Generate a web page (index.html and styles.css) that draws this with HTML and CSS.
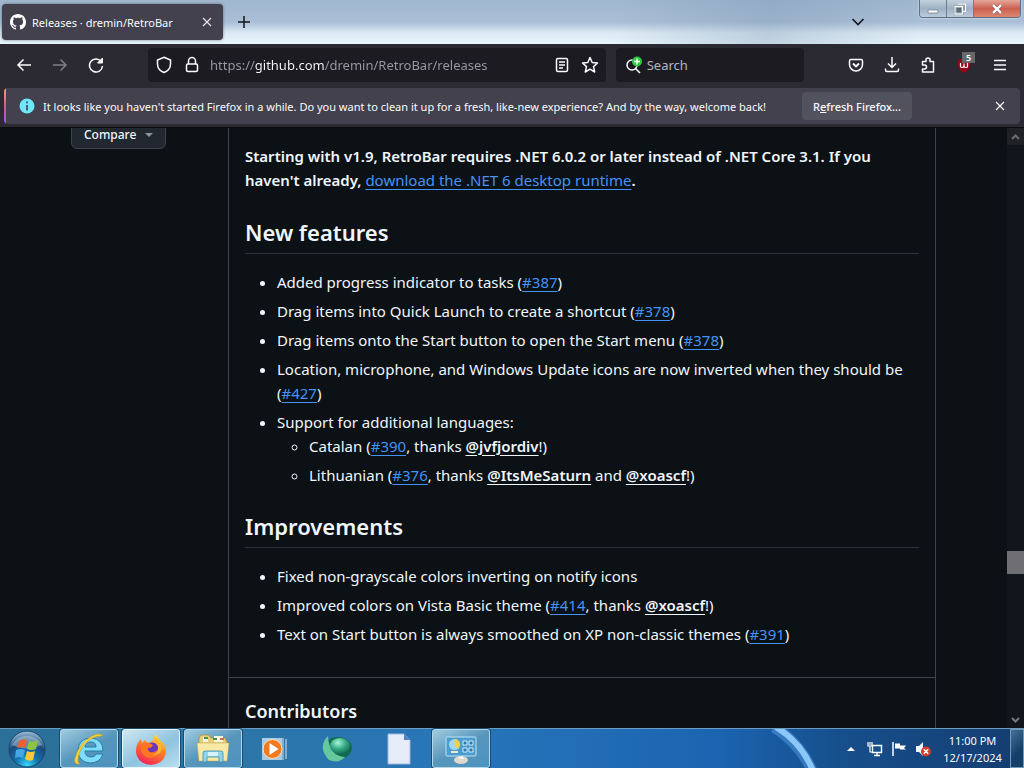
FILE: index.html
```html
<!DOCTYPE html>
<html lang="en">
<head>
<meta charset="utf-8">
<title>Releases · dremin/RetroBar</title>
<link rel="stylesheet" href="styles.css">
</head>
<body>
<div class="desktop">
  <header class="titlebar">
    <div class="tab">
      <svg class="tab-logo" viewBox="0 0 16 16"><path fill="#fff" d="M8 0C3.58 0 0 3.58 0 8c0 3.54 2.29 6.53 5.47 7.59.4.07.55-.17.55-.38 0-.19-.01-.82-.01-1.49-2.01.37-2.53-.49-2.69-.94-.09-.23-.48-.94-.82-1.13-.28-.15-.68-.52-.01-.53.63-.01 1.08.58 1.23.82.72 1.21 1.87.87 2.33.66.07-.52.28-.87.51-1.07-1.78-.2-3.64-.89-3.64-3.95 0-.87.31-1.59.82-2.15-.08-.2-.36-1.02.08-2.12 0 0 .67-.21 2.2.82.64-.18 1.32-.27 2-.27s1.36.09 2 .27c1.53-1.04 2.2-.82 2.2-.82.44 1.1.16 1.92.08 2.12.51.56.82 1.27.82 2.15 0 3.07-1.87 3.75-3.65 3.95.29.25.54.73.54 1.48 0 1.07-.01 1.93-.01 2.2 0 .21.15.46.55.38A8.01 8.01 0 0 0 16 8c0-4.42-3.58-8-8-8z"/></svg>
      <span class="tab-title">Releases · dremin/RetroBar</span>
      <button class="icon-btn tab-close" aria-label="Close tab"><svg width="10" height="10" viewBox="0 0 10 10"><path d="M1 1l8 8M9 1L1 9" stroke="#e4e4ea" stroke-width="1.2"/></svg></button>
    </div>
    <button class="icon-btn new-tab" aria-label="New tab"><svg width="14" height="14" viewBox="0 0 14 14"><path d="M7 1v12M1 7h12" stroke="#15141a" stroke-width="1.5"/></svg></button>
    <button class="icon-btn list-tabs" aria-label="List all tabs"><svg width="14" height="8" viewBox="0 0 14 8"><path d="M1.5 1L7 6.500l5.500-5.500" fill="none" stroke="#15141a" stroke-width="1.6"/></svg></button>
    <div class="window-buttons">
      <button class="win-btn" aria-label="Minimize"><svg width="12" height="12" viewBox="0 0 12 12"><rect x="1" y="7" width="10" height="3" rx="1" fill="#fff" stroke="#65717f" stroke-width=".7"/></svg></button>
      <button class="win-btn" aria-label="Restore"><svg width="12" height="12" viewBox="0 0 12 12"><path d="M4 1h7.500v7.500H9M1 3.500h7.500V11H1zM3.500 6H6v2.500H3.500z" fill="none" stroke="#5c6977" stroke-width="2"/><path d="M4 1h7.500v7.500H9M1 3.500h7.500V11H1z" fill="none" stroke="#fff" stroke-width="1.3"/></svg></button>
      <button class="win-btn win-close" aria-label="Close"><svg width="12" height="12" viewBox="0 0 12 12"><path d="M2 2l8 8M10 2l-8 8" stroke="#733" stroke-width="3.600"/><path d="M2 2l8 8M10 2l-8 8" stroke="#fff" stroke-width="2.500"/></svg></button>
    </div>
  </header>

  <nav class="toolbar" aria-label="Navigation">
    <div class="tool-group">
      <button class="icon-btn tool" aria-label="Back"><svg width="16" height="16" viewBox="0 0 16 16"><path d="M15 8H2M7.500 2.500L2 8l5.500 5.500"/></svg></button>
      <button class="icon-btn tool dim" aria-label="Forward"><svg width="16" height="16" viewBox="0 0 16 16"><path d="M1 8h13M8.500 2.500L14 8l-5.500 5.500"/></svg></button>
      <button class="icon-btn tool" aria-label="Reload"><svg width="16" height="16" viewBox="0 0 16 16"><path d="M13.500 5A6.500 6.500 0 1 0 14.500 9"/><path d="M14.500 1v5h-5z" fill="#fbfbfe" stroke-width="1"/></svg></button>
    </div>
    <div class="field url-field">
      <button class="icon-btn field-btn" aria-label="Tracking protection"><svg width="16" height="18" viewBox="0 0 16 18"><path d="M8 1.300L14.500 4v4c0 4-2.700 7-6.500 8.500C4.200 15 1.500 12 1.500 8V4z"/></svg></button>
      <button class="icon-btn field-btn" aria-label="Site information"><svg width="14" height="18" viewBox="0 0 14 18"><path d="M3.500 8V5a3.500 3.500 0 0 1 7 0v3"/><rect x="1.500" y="8" width="11" height="7.500" rx="1.500"/></svg></button>
      <input class="url-input" type="text" aria-label="Address" value="https://github.com/dremin/RetroBar/releases">
      <button class="icon-btn field-btn" aria-label="Reader view"><svg width="16" height="16" viewBox="0 0 16 16"><rect x="2.500" y="1.500" width="11" height="13" rx="1.500"/><path d="M5 5h6M5 8h6M5 11h4"/></svg></button>
      <button class="icon-btn field-btn" aria-label="Bookmark"><svg width="18" height="18" viewBox="0 0 18 18"><path d="M9 1.500l2.200 5 5.300.5-4 3.600 1.200 5.400L9 13.200 4.300 16l1.200-5.400-4-3.600 5.300-.5z" stroke-linejoin="round"/></svg></button>
    </div>
    <div class="field search-field">
      <svg class="search-icon" width="18" height="18" viewBox="0 0 18 18"><circle cx="7" cy="9" r="5" fill="none" stroke="#fbfbfe" stroke-width="1.500"/><path d="M10.500 12.500L15 17" stroke="#fbfbfe" stroke-width="1.600"/><circle cx="12" cy="5.500" r="5" fill="#30c83c"/><path d="M12 2.500v6M9 5.500h6" stroke="#fff" stroke-width="1.500"/></svg>
      <input class="search-input" type="text" aria-label="Search" placeholder="Search">
    </div>
    <div class="tool-group tools-right">
      <button class="icon-btn tool" aria-label="Save to Pocket"><svg width="16" height="16" viewBox="0 0 16 16"><path d="M3 2.500h10q1.500 0 1.500 1.500v3.500a6.500 6.500 0 0 1-13 0V4q0-1.500 1.500-1.500z"/><path d="M5 6.500l3 3 3-3" stroke-width="1.800"/></svg></button>
      <button class="icon-btn tool" aria-label="Downloads"><svg width="16" height="16" viewBox="0 0 16 16"><path d="M8 0v10.500M4 6.500l4 4 4-4M1.500 11.500V13q0 1.500 1.500 1.500h10q1.500 0 1.500-1.500v-1.500"/></svg></button>
      <button class="icon-btn tool" aria-label="Extensions"><svg width="16" height="16" viewBox="0 0 16 16"><path d="M6 4.500V3a2 2 0 0 1 4 0v1.500h3.500v10.500H2.500V12H4.500a2 2 0 0 0 0-4H2.500V4.500z" stroke-linejoin="round"/></svg></button>
      <button class="icon-btn tool badge-host" aria-label="uBlock Origin, 5 blocked"><svg width="16" height="16" viewBox="0 0 16 16"><path d="M8 1l6 2v5c0 4-3 6-6 8-3-2-6-4-6-8V3z" fill="#970718" stroke="none"/><path d="M4.500 6v3q0 1.500 1.500 1.500T8 9V6.500M8 9q0 1.500 1.800 1.500T11.500 9V6" stroke-width="1.200"/></svg><span class="badge">5</span></button>
      <button class="icon-btn tool" aria-label="Menu"><svg width="16" height="16" viewBox="0 0 16 16"><path d="M2 3.500h12M2 8h12M2 12.500h12"/></svg></button>
    </div>
  </nav>

  <div class="notice-row">
    <div class="notice" role="status">
      <svg class="notice-icon" width="16" height="16" viewBox="0 0 16 16"><circle cx="8" cy="8" r="7.500" fill="#6fe6fa"/><path d="M8 3.500v1.800M8 7v5.500" stroke="#35444f" stroke-width="1.600"/></svg>
      <span class="notice-text">It looks like you haven't started Firefox in a while. Do you want to clean it up for a fresh, like-new experience? And by the way, welcome back!</span>
      <button class="notice-action">R<u>e</u>fresh Firefox...</button>
      <button class="icon-btn notice-close" aria-label="Dismiss"><svg width="10" height="10" viewBox="0 0 10 10"><path d="M1 1l8 8M9 1L1 9" stroke="#fbfbfe" stroke-width="1.200"/></svg></button>
    </div>
  </div>

  <div class="viewport">
    <div class="page">
      <aside class="sidebar">
        <button class="compare">Compare <svg width="8" height="4" viewBox="0 0 8 4"><path d="M0 0h8L4 4z" fill="#8d96a0"/></svg></button>
      </aside>
      <main class="release">
        <section class="notes">
          <p class="lead">Starting with v1.9, RetroBar requires .NET 6.0.2 or later instead of .NET Core 3.1. If you haven't already, <a href="#">download the .NET 6 desktop runtime</a>.</p>
          <h2>New features</h2>
          <ul>
            <li>Added progress indicator to tasks (<a href="#">#387</a>)</li>
            <li>Drag items into Quick Launch to create a shortcut (<a href="#">#378</a>)</li>
            <li>Drag items onto the Start button to open the Start menu (<a href="#">#378</a>)</li>
            <li>Location, microphone, and Windows Update icons are now inverted when they should be (<a href="#">#427</a>)</li>
            <li>Support for additional languages:
              <ul>
                <li>Catalan (<a href="#">#390</a>, thanks <a class="mention" href="#">@jvfjordiv</a>!)</li>
                <li>Lithuanian (<a href="#">#376</a>, thanks <a class="mention" href="#">@ItsMeSaturn</a> and <a class="mention" href="#">@xoascf</a>!)</li>
              </ul>
            </li>
          </ul>
          <h2>Improvements</h2>
          <ul>
            <li>Fixed non-grayscale colors inverting on notify icons</li>
            <li>Improved colors on Vista Basic theme (<a href="#">#414</a>, thanks <a class="mention" href="#">@xoascf</a>!)</li>
            <li>Text on Start button is always smoothed on XP non-classic themes (<a href="#">#391</a>)</li>
          </ul>
        </section>
        <section class="contributors"><h3>Contributors</h3></section>
      </main>
    </div>
    <div class="scrollbar">
      <button class="icon-btn scroll-btn scroll-up" aria-label="Scroll up"><svg width="9" height="6" viewBox="0 0 9 6"><path d="M1 5l3.500-3.500L8 5" fill="none" stroke="#6b6b70" stroke-width="2"/></svg></button>
      <div class="scroll-track"><div class="scroll-thumb"></div></div>
      <button class="icon-btn scroll-btn" aria-label="Scroll down"><svg width="9" height="6" viewBox="0 0 9 6"><path d="M1 1l3.500 3.500L8 1" fill="none" stroke="#77777c" stroke-width="2"/></svg></button>
    </div>
  </div>

  <footer class="taskbar">
    <svg class="wallpaper-arc" width="70" height="40" viewBox="0 0 70 40"><path d="M4 -2Q30 14 42 42" fill="none" stroke="#5ba6ec" stroke-width="11" opacity=".45"/><path d="M6 -2Q32 14 43 42" fill="none" stroke="#8cc7fa" stroke-width="6"/></svg>
    <button class="start" aria-label="Start">
      <svg width="38" height="38" viewBox="0 0 38 38"><defs><radialGradient id="orb" cx=".5" cy=".95" r=".9"><stop offset="0" stop-color="#35d8fa"/><stop offset=".35" stop-color="#1474b2"/><stop offset=".7" stop-color="#1b4a7c"/><stop offset="1" stop-color="#8cb0cc"/></radialGradient></defs><circle cx="19" cy="19" r="18" fill="url(#orb)" stroke="#17456c"/><path d="M4 15a16 14 0 0 1 30 0Q19 22 4 15z" fill="#cfe0ea" opacity=".4"/><path d="M11 11q4-3 8-1l-2 8q-4-2-8 0z" fill="#ee6032"/><path d="M21 11q4 2 9-1l-2 9q-5 2-9 0z" fill="#8fc442"/><path d="M8 20q5-2 9 0l-2 8q-4-2-8 0z" fill="#44a8e4"/><path d="M19 21q4 2 8 0l-2 9q-4 2-8-1z" fill="#fcc832"/></svg>
    </button>
    <div class="tasks">
      <button class="task running" aria-label="Internet Explorer">
        <svg width="34" height="34" viewBox="0 0 34 34"><path d="M31 19H13q0 6 6 6 4 0 5-3h7q-3 9-13 9Q6 30 6 18 7 6 19 6q12 1 12 13zM13 15h11q0-5-5-5t-6 5z" fill="#7fdcfa" stroke="#237fae" stroke-width="1"/><path d="M8 32q-7 1-5-6Q7 11 20 4q8-4 11 0-8-1-16 6Q7 17 6 27q-.5 4 2 5z" fill="#f6d43b" stroke="#c39820" stroke-width=".6"/></svg>
      </button>
      <button class="task running active" aria-label="Firefox">
        <svg width="34" height="34" viewBox="0 0 34 34"><defs><linearGradient id="fox" x1=".8" y1="0" x2=".3" y2="1"><stop offset="0" stop-color="#fff04a"/><stop offset=".4" stop-color="#ff8a20"/><stop offset="1" stop-color="#f4205a"/></linearGradient></defs><path d="M19 8q0-4 4-6 0 4 4 7 5 4 5 10a15 14 0 0 1-30 0q0-8 5-12l1 4 3-3q1 2 4 3 3-1 4-3z" fill="url(#fox)"/><circle cx="18" cy="18" r="7.500" fill="#6c35c0"/><path d="M8 13q6-4 11 0-1 3-5 3-1 2 2 4 5 1 8-3 1 10-8 9-8-1-9-9z" fill="#ff7524"/><path d="M19 10q6 2 5 8-1 4-6 5 9 1 10-7-1-7-9-8z" fill="#ffb22e"/></svg>
      </button>
      <button class="task running" aria-label="File Explorer">
        <svg width="36" height="34" viewBox="0 0 36 34"><path d="M4 6l2-3h8l2 3h14l2 4v18H4z" fill="#e9ce75" stroke="#a5873b" stroke-width=".7"/><path d="M8 5h5v5H8zM19 4h9v6h-9z" fill="#f8f7df"/><path d="M9 6h4M18 7h4" stroke="#43934a" stroke-width="2"/><path d="M25 7h4" stroke="#d26a53" stroke-width="2"/><path d="M2 11h32l-2 18H4z" fill="#f9e9a6" stroke="#bea057" stroke-width=".5"/><path d="M8 30v-9q0-2 2-2h16q2 0 2 2v9h-4v-5H12v5z" fill="#8fd4ec" stroke="#3d8eb0" stroke-width=".8"/><path d="M13 20h10v4H13z" fill="#d7f2fa"/></svg>
      </button>
      <button class="task" aria-label="Media Player">
        <svg width="30" height="28" viewBox="0 0 30 28"><path d="M2 3h20v22H2z" fill="#a9cbe4"/><path d="M23 3v22M26 4v20" stroke="#d8e5ef"/><circle cx="12.500" cy="14" r="9.500" fill="#f27b20" stroke="#fde1c2"/><path d="M9.500 8l9 6-9 6z" fill="#fff"/></svg>
      </button>
      <button class="task" aria-label="Sphere">
        <svg width="34" height="30" viewBox="0 0 34 30"><defs><radialGradient id="orb-green" cx=".4" cy=".3" r=".8"><stop offset="0" stop-color="#a6f5d3"/><stop offset=".5" stop-color="#33a884"/><stop offset="1" stop-color="#0d5f49"/></radialGradient></defs><ellipse cx="18" cy="14" rx="14" ry="11" fill="#13694f"/><path d="M8 2Q-3 13 9 26q10 4 16-3Q9 22 8 2z" fill="#65c99e"/><ellipse cx="20" cy="12" rx="10" ry="8" fill="url(#orb-green)"/></svg>
      </button>
      <button class="task" aria-label="Document">
        <svg width="26" height="32" viewBox="0 0 26 32"><path d="M2 1h16l6 6v24H2z" fill="#e6edf9" stroke="#9fb6da"/><path d="M18 1v6h6z" fill="#4b83c9"/></svg>
      </button>
      <button class="task running" aria-label="Control Panel">
        <svg width="34" height="32" viewBox="0 0 34 32"><rect x="2" y="4" width="30" height="19" rx="1" fill="#4b9dd0" stroke="#c0e3f4"/><circle cx="10.500" cy="11.500" r="5.500" fill="#a0d6ef"/><path d="M10.500 11.500V6a5.500 5.500 0 0 1 3 10z" fill="#efd248"/><path d="M19 8h4v4h-4zM25 8h4v4h-4zM19 15h4v4h-4zM25 15h4v4h-4z" fill="#287bb0" stroke="#d1edf8"/><path d="M7 19h7" stroke="#e5ead2" stroke-width="2"/><ellipse cx="17" cy="27" rx="7" ry="4" fill="#ded9cc"/><path d="M14 25l4-2 2 3" fill="#fff"/></svg>
      </button>
    </div>
    <div class="tray">
      <button class="icon-btn tray-btn" aria-label="Show hidden icons"><svg width="8" height="5" viewBox="0 0 8 5"><path d="M0 5l4-4 4 4z" fill="#fff"/></svg></button>
      <button class="icon-btn tray-btn" aria-label="Network"><svg width="16" height="16" viewBox="0 0 16 16"><path d="M5.500 4.500h9v7h-9zM10 12v2M7 14.500h6" fill="#174f86" stroke="#fff" stroke-width="1.400"/><path d="M1 1v4h4V1M3 1v3M3 5v6h2" fill="#174f86" stroke="#fff" stroke-width="1.200"/></svg></button>
      <button class="icon-btn tray-btn" aria-label="Action Center"><svg width="16" height="16" viewBox="0 0 16 16"><path d="M2 1v14" stroke="#fff" stroke-width="1.500"/><path d="M4 2.500h5v2h6l-2 2.500 2 1.500H9v-1H4z" fill="#fff"/></svg></button>
      <button class="icon-btn tray-btn" aria-label="Volume muted"><svg width="16" height="16" viewBox="0 0 16 16"><path d="M1 5h3l4-4v14l-4-4H1z" fill="#f4f8fc"/><circle cx="11" cy="10.500" r="5" fill="#cf3c29"/><path d="M8.800 8.300l4.400 4.400M13.200 8.300l-4.400 4.400" stroke="#fff" stroke-width="1.600"/></svg></button>
      <div class="clock"><time>11:00 PM</time><time>12/17/2024</time></div>
      <button class="show-desktop" aria-label="Show desktop"></button>
    </div>
  </footer>
</div>
</body>
</html>
```

FILE: styles.css
```css
* { box-sizing: border-box; }

body {
  margin: 0;
  font-family: "Noto Sans", "Open Sans", sans-serif;
  font-size: 11px;
  color: #fbfbfe;
  background: #0b1114;
}

button, input { font: inherit; color: inherit; }
button { padding: 0; border: 0; background: none; }
svg { flex: none; }

.desktop {
  display: flex;
  flex-direction: column;
  height: 100vh;
  overflow: hidden;
}

.icon-btn { display: flex; align-items: center; justify-content: center; }

/* Title bar */
.titlebar {
  display: flex;
  flex: none;
  height: 44px;
  padding: 4px 3px 4px 2px;
  background:
    linear-gradient(100deg, transparent 60%, #7993ae55 75%, transparent 90%),
    linear-gradient(#9fb7cf, #a9bfd6 50%, #dceaf4 75%, #e6f4fa);
}
.tab {
  display: flex;
  align-items: center;
  gap: 6px;
  width: 221px;
  padding: 0 8px;
  border-radius: 4px;
  background: #42414d;
  box-shadow: 0 0 3px #15141a80;
}
.tab-logo { width: 16px; height: 16px; }
.tab-title { flex: 1; white-space: nowrap; }
.tab-close { width: 16px; height: 16px; }
.new-tab { width: 42px; }
.list-tabs { width: 30px; margin-left: auto; }
.window-buttons {
  display: flex;
  align-self: flex-start;
  height: 18px;
  margin: -4px 0 0 46px;
  border: 1px solid #5d6f80;
  border-top: 0;
  border-radius: 0 0 4px 4px;
  box-shadow: 0 0 2px #ffffff;
  overflow: hidden;
}
.win-btn {
  display: flex;
  align-items: center;
  justify-content: center;
  width: 27px;
  border-right: 1px solid #6d7e8f;
  background: linear-gradient(#c3d1de, #9fb1c4 50%, #b9cbdb);
}
.win-close {
  width: 46px;
  border-right: 0;
  background: linear-gradient(#e5a79a, #cc6150 50%, #dd8672);
}

/* Navigation toolbar */
.toolbar {
  display: flex;
  flex: none;
  align-items: center;
  height: 44px;
  padding: 0 6px 2px;
  background: #2b2a33;
}
.tool-group { display: flex; }
.tool { width: 36px; height: 36px; }
.tool svg, .field-btn svg {
  fill: none;
  stroke: #fbfbfe;
  stroke-width: 1.500;
}
.dim { opacity: 0.4; }
.field {
  display: flex;
  align-items: center;
  min-width: 0;
  height: 34px;
  border-radius: 4px;
  background: #1c1b22;
}
.url-field { flex: 463 1 0; margin-left: 34px; padding: 0 2px; }
.search-field { flex: 183 1 0; margin: 0 34px 0 10px; padding-left: 9px; }
.field-btn { width: 28px; height: 30px; }
.url-input, .search-input {
  flex: 1;
  min-width: 0;
  padding: 0;
  border: 0;
  outline: 0;
  font-size: 13px;
}
.url-input {
  margin-left: 4px;
  background: linear-gradient(90deg, #9a9aa2 45px, #fbfbfe 45px, #fbfbfe 115px, #9a9aa2 115px);
  -webkit-background-clip: text;
  background-clip: text;
  -webkit-text-fill-color: transparent;
}
.search-input { margin-left: 4px; background: none; }
.search-input::placeholder { color: #b6b6bd; opacity: 1; }
.badge-host { position: relative; }
.badge {
  position: absolute;
  top: 5px;
  right: 7px;
  width: 13px;
  font-size: 9px;
  font-weight: 600;
  line-height: 11px;
  color: #fff;
  background: #68686c;
}

/* Notification bar */
.notice-row { flex: none; padding: 0 4px 3px; background: #2b2a33; border-bottom: 1px solid #0c0c0d; }
.notice {
  display: flex;
  align-items: center;
  height: 36px;
  padding: 0 12px 0 15px;
  border-radius: 4px;
  background: linear-gradient(#ff9a75, #e0538b 50%, #9059ff) 0 0 / 2px 100% no-repeat #42414d;
}
.notice-icon { margin-right: 8px; }
.notice-text { white-space: nowrap; }
.notice-action {
  height: 28px;
  margin-left: 36px;
  padding: 0 11px;
  border-radius: 4px;
  white-space: nowrap;
  font-weight: 500;
  background: #52515e;
}
.notice-close { width: 16px; height: 16px; margin-left: auto; }

/* Web page */
.viewport { display: flex; flex: 1; min-height: 0; overflow: hidden; background: #0b1114; }
.page {
  display: grid;
  flex: 1;
  grid-template-columns: 228px minmax(0, 1fr) 71px;
  margin-top: -13px;
  font-size: 15px;
  line-height: 24px;
  color: #f0f6fc;
}
.sidebar { padding-left: 71px; }
.compare {
  display: flex;
  align-items: center;
  justify-content: space-between;
  width: 95px;
  height: 34px;
  padding: 6px 12px 0;
  border: 1px solid #3d444d;
  border-radius: 6px;
  font-size: 12px;
  font-weight: 500;
  background: #212830;
}
.release { border: solid #3d444d; border-width: 0 1px; }
.notes { padding: 29px 16px 31px; }
.lead { margin: 0 0 25px; font-weight: 600; }
.release a { color: #4493f8; font-weight: 400; text-underline-offset: 3px; }
.release .mention { color: #f0f6fc; font-weight: 600; }
.notes h2 {
  margin: 24px 0 16px;
  padding-bottom: 6px;
  border-bottom: 1px solid #2b323a;
  font-size: 22px;
  font-weight: 600;
  line-height: 30px;
}
.notes ul { margin: 0; padding-left: 32px; }
.notes li + li { margin-top: 5px; }
.contributors { padding: 20px 16px; border-top: 1px solid #3d444d; }
.contributors h3 { margin: 0; font-size: 18px; font-weight: 600; line-height: 26px; }

.scrollbar { display: flex; flex-direction: column; width: 17px; background: #12151b; }
.scroll-btn { height: 17px; }
.scroll-up { background: #202027; }
.scroll-track { display: flex; flex-direction: column; flex: 1; padding-bottom: 137px; }
.scroll-thumb { height: 23px; margin-top: auto; background: #6e6e73; }

/* Taskbar */
.taskbar {
  position: relative;
  display: flex;
  flex: none;
  height: 40px;
  border-top: 1px solid #6c9cc0;
  background: linear-gradient(90deg, #2a7097, #2c76a8 24%, #2875ba 45%, #1b64b1 70%, #164f8c 82%, #143d70);
}
.wallpaper-arc { position: absolute; top: 0; right: 184px; }
.start { display: flex; align-items: center; justify-content: center; width: 54px; }
.tasks { display: flex; flex: 1; gap: 4px; margin-left: 6px; }
.task {
  display: flex;
  align-items: center;
  justify-content: center;
  width: 58px;
  border: 1px solid transparent;
  border-radius: 3px;
}
.running {
  border-color: #b6d7e8;
  background: linear-gradient(150deg, #9fcbe0, #5796bb 50%, #4c93c0);
  box-shadow: 0 0 0 1px #194c70;
}
.active { border-color: #e8f6fd; background: linear-gradient(150deg, #cfe7f2, #8fc3df 55%, #b7dff1); }
.tray { position: relative; display: flex; align-items: center; }
.tray-btn { width: 24px; height: 30px; }
.clock {
  display: flex;
  flex-direction: column;
  align-items: center;
  width: 75px;
  line-height: 17px;
}
.show-desktop {
  align-self: stretch;
  width: 14px;
  border: 1px solid #7399b8;
  background: linear-gradient(130deg, #477197, #173e69 60%);
}
```
